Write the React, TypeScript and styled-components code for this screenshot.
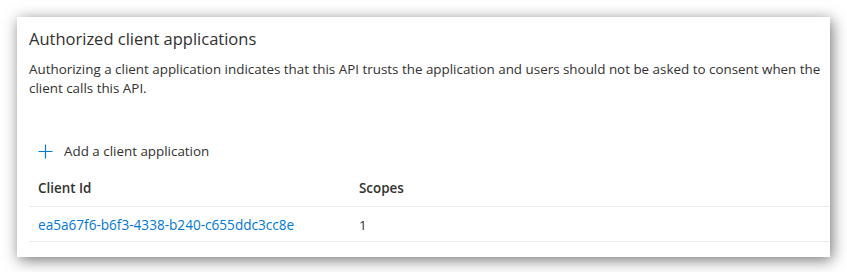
import React from 'react';
import styled, { createGlobalStyle } from 'styled-components';

const Global = createGlobalStyle`
  html, body {
    margin: 0;
    background: #ffffff;
  }
  body {
    padding: 17px;
    font-family: "Open Sans", "Noto Sans", sans-serif;
    color: #323130;
  }
`;

const Card = styled.section`
  width: 813px;
  height: 240px;
  box-sizing: border-box;
  background: #ffffff;
  box-shadow: 2px 3px 14px rgba(0, 0, 0, 0.55);
  padding: 10px 0 0 12px;
  display: flex;
  flex-direction: column;
`;

const Title = styled.h2`
  margin: 0;
  font-size: 16.5px;
  font-weight: 400;
  line-height: 24px;
`;

const Description = styled.p`
  margin: 9px 0 0;
  font-size: 13.4px;
  line-height: 19px;
  padding-right: 8px;
`;

const AddButton = styled.button`
  display: flex;
  align-items: center;
  gap: 11px;
  margin: 41px 0 0;
  padding: 0 0 0 9px;
  border: none;
  background: none;
  font: inherit;
  font-size: 13.4px;
  color: #323130;
  height: 24px;
  cursor: pointer;
`;

const Table = styled.div`
  display: flex;
  flex-direction: column;
  margin-top: 6px;
`;

const Row = styled.div<{ $header?: boolean }>`
  display: grid;
  grid-template-columns: 321px 1fr;
  height: ${p => (p.$header ? '37px' : '34px')};
  align-items: center;
  font-size: 13.4px;
  font-weight: ${p => (p.$header ? 600 : 400)};
  border-bottom: 1px solid #edebe9;
`;

const Cell = styled.div<{ $offset?: number }>`
  padding-left: 9px;
  padding-top: ${p => p.$offset ?? 0}px;
`;

const Link = styled.a`
  color: #0078d4;
  font-size: 13.6px;
  text-decoration: none;
`;

const PlusIcon = () => (
  <svg width="15" height="15" viewBox="0 0 15 15" fill="none">
    <path d="M7.5 0.5V14.5M0.5 7.5H14.5" stroke="#0078d4" strokeWidth="1.2" />
  </svg>
);

export default function App() {
  return (
    <>
      <Global />
      <Card>
        <Title>Authorized client applications</Title>
        <Description>
          Authorizing a client application indicates that this API trusts the application and users should not be asked
          to consent when the client calls this API.
        </Description>
        <AddButton>
          <PlusIcon />
          Add a client application
        </AddButton>
        <Table>
          <Row $header>
            <Cell $offset={-2}>Client Id</Cell>
            <Cell $offset={-2}>Scopes</Cell>
          </Row>
          <Row>
            <Cell $offset={1}>
              <Link href="#">ea5a67f6-b6f3-4338-b240-c655ddc3cc8e</Link>
            </Cell>
            <Cell $offset={1}>1</Cell>
          </Row>
        </Table>
      </Card>
    </>
  );
}
